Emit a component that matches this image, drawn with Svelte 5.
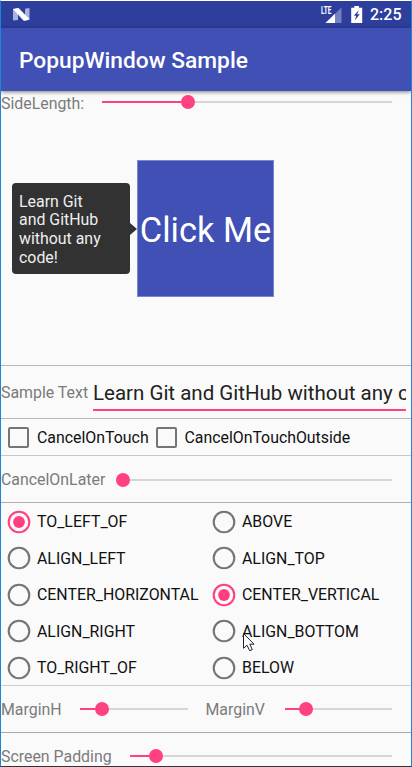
<script>
  let text = $state('Learn Git and GitHub without any code!');
  let horizontal = $state('TO_LEFT_OF');
  let vertical = $state('CENTER_VERTICAL');

  const rows = [
    ['TO_LEFT_OF', 'ABOVE'],
    ['ALIGN_LEFT', 'ALIGN_TOP'],
    ['CENTER_HORIZONTAL', 'CENTER_VERTICAL'],
    ['ALIGN_RIGHT', 'ALIGN_BOTTOM'],
    ['TO_RIGHT_OF', 'BELOW']
  ];
</script>

{#snippet slider(value)}
  <div class="slider">
    <div class="fill" style="width: {value}%"></div>
    <div class="thumb" style="left: {value}%"></div>
  </div>
{/snippet}

{#snippet radio(label, selected, choose)}
  <button class="radio" class:selected onclick={choose}>
    <svg width="24" height="24" viewBox="0 0 24 24">
      <circle cx="12" cy="12" r="10.3" fill="none" stroke="currentColor" stroke-width="2.1" />
      {#if selected}<circle cx="12" cy="12" r="5.9" fill="currentColor" />{/if}
    </svg>
    <span>{label}</span>
  </button>
{/snippet}

<div class="screen">
  <header class="status">
    <svg class="nougat" width="17" height="13" viewBox="0 0 17 13">
      <path d="M0 1.5 5 .5V12L0 12.5Z M12 .8 16.5 0V11.5L12 12.5Z" fill="#aab2df" />
      <path d="M.3 1.2 5.3 0 16.4 11.3 11 12.8Z" fill="#fff" stroke="#fff" stroke-width=".5" />
    </svg>
    <svg class="signal" width="21" height="17" viewBox="0 0 21 17">
      <path d="M20.5 1.5V17H4.5Z" fill="#7680c0" />
      <path d="M14 7.7V17H4.5Z" fill="#fff" />
      <path d="M0 0H11.5V8.5H0Z" fill="#2d3e9c" />
      <text x="0" y="8" textLength="10.5" lengthAdjust="spacingAndGlyphs">LTE</text>
    </svg>
    <svg class="battery" width="12" height="18" viewBox="0 0 12 18">
      <path d="M3.3 0H8V1.8H11.2V17H.2V1.8H3.3Z" fill="#fff" />
      <path d="M7.7 4.2 2.8 9.7H5.3L3.8 14.6 8.8 8.3H6.2Z" fill="#2d3e9c" />
    </svg>
    <span class="clock">2:25</span>
  </header>

  <div class="appbar"><h1>PopupWindow Sample</h1></div>

  <div class="row side">
    <span class="label">SideLength:</span>
    {@render slider(29.5)}
  </div>

  <div class="stage">
    <div class="popup">Learn Git<br />and GitHub<br />without any<br />code!</div>
    <button class="target">Click Me</button>
  </div>

  <div class="row sample">
    <span class="label">Sample Text</span>
    <div class="field">{text}</div>
  </div>

  <div class="row checks">
    <i class="box"></i><span class="touch">CancelOnTouch</span>
    <i class="box"></i><span class="outside">CancelOnTouchOutside</span>
  </div>

  <div class="row later">
    <span class="label">CancelOnLater</span>
    {@render slider(0)}
  </div>

  <div class="options">
    {#each rows as [h, v]}
      {@render radio(h, horizontal === h, () => (horizontal = h))}
      {@render radio(v, vertical === v, () => (vertical = v))}
    {/each}
  </div>

  <div class="row margins">
    <div class="half first">
      <span class="label">MarginH</span>
      {@render slider(20)}
    </div>
    <div class="half">
      <span class="label">MarginV</span>
      {@render slider(20)}
    </div>
  </div>

  <div class="row padding">
    <span class="label">Screen Padding</span>
    {@render slider(10)}
  </div>

  <svg class="cursor" width="14" height="21" viewBox="0 0 14 21">
    <path d="M1.5 1.5V16.3L5 13.2 7.7 18.7 10.3 17.6 7.8 12.2H12Z" fill="#fff" stroke="#242030" stroke-width="1" />
  </svg>
</div>

<style>
  .screen {
    position: relative;
    box-sizing: border-box;
    width: 412px;
    height: 767px;
    overflow: hidden;
    display: flex;
    flex-direction: column;
    background: #fafafa;
    border: 1px solid #1b86d6;
    border-top-color: #fff;
    border-bottom-color: #333;
    font-family: Roboto, sans-serif;
    font-size: 15.9px;
    color: #111;
  }
  .status {
    display: flex;
    flex: none;
    height: 27px;
    background: #2d3e9c;
    color: #fff;
  }
  .nougat { margin: 7px 0 0 12px; }
  .signal { margin: 5px 0 0 291px; overflow: visible; }
  .signal text {
    font-size: 10px;
    font-weight: 700;
    fill: #fff;
  }
  .battery { margin: 5px 0 0 9px; }
  .clock {
    margin-left: 7px;
    line-height: 28px;
    font-weight: 500;
    font-size: 16px;
  }
  .appbar {
    flex: none;
    height: 63px;
    padding-left: 18px;
    background: #4050b5;
    box-shadow: 0 1px 4px rgba(0, 0, 0, 0.5);
    z-index: 1;
  }
  h1 {
    margin: 0;
    font-size: 22.75px;
    line-height: 66px;
    font-weight: 500;
    color: #fff;
    white-space: nowrap;
  }
  .row {
    display: flex;
    flex: none;
    box-sizing: border-box;
    align-items: center;
    padding-right: 19px;
    white-space: nowrap;
  }
  .label {
    flex: none;
    color: #7b7b7b;
  }
  .slider {
    position: relative;
    flex: 1;
    height: 2px;
    background: #d6d6d6;
  }
  .fill {
    height: 2px;
    background: #ff4081;
  }
  .thumb {
    position: absolute;
    top: -6px;
    width: 14px;
    height: 14px;
    margin-left: -7px;
    border-radius: 50%;
    background: #ff4081;
  }
  .side { height: 23px; }
  .side .label { width: 101px; padding-top: 1px; }
  .side .slider { margin-bottom: 2px; }
  .stage {
    position: relative;
    flex: none;
    box-sizing: border-box;
    height: 252px;
    padding: 46px 0 0 136px;
    border-bottom: 1px solid #b7b7b7;
  }
  .target {
    display: block;
    width: 137px;
    height: 137px;
    padding: 3px 0 0;
    border: 1px solid #7b87cc;
    background: #4050b5;
    color: #fff;
    font: 34.4px Roboto, sans-serif;
    white-space: nowrap;
  }
  .popup {
    position: absolute;
    left: 11px;
    top: 68.7px;
    box-sizing: border-box;
    width: 118.3px;
    height: 91px;
    padding: 10px 7px 8px;
    border-radius: 4px;
    background: #323232;
    color: #eee;
    line-height: 18.7px;
  }
  .popup::after {
    content: '';
    position: absolute;
    left: 118px;
    top: 40px;
    border: 6px solid transparent;
    border-left: 7px solid #323232;
    border-right: 0;
  }
  .sample {
    height: 53px;
    padding-right: 5px;
    border-bottom: 1px solid #b7b7b7;
  }
  .sample .label { width: 92px; }
  .field {
    flex: 1;
    height: 34px;
    margin-top: 3px;
    box-sizing: border-box;
    overflow: hidden;
    border-bottom: 2px solid #ff4081;
    color: #222;
    font-size: 20.5px;
    line-height: 32px;
  }
  .checks {
    height: 37px;
    border-bottom: 1px solid #c8c8c8;
  }
  .box {
    box-sizing: border-box;
    width: 21px;
    height: 21px;
    margin: 0 8px 0 7px;
    border: 2px solid #757575;
    border-radius: 2px;
  }
  .touch { width: 112px; }
  .outside { letter-spacing: -0.02px; }
  .touch + .box { margin-right: 7.5px; }
  .later {
    height: 47px;
    padding-top: 1px;
    border-bottom: 1px solid #b0b0b0;
  }
  .later .label { width: 122px; }
  .options {
    display: grid;
    flex: none;
    box-sizing: border-box;
    grid-template-columns: 205px 205px;
    grid-auto-rows: 36.5px;
    height: 183px;
    border-bottom: 1px solid #cfcfcf;
  }
  .radio {
    display: flex;
    align-items: center;
    gap: 6px;
    padding: 1px 0 0 6px;
    border: 0;
    background: none;
    color: #111;
    font: 15.9px Roboto, sans-serif;
  }
  .radio svg { color: #757575; }
  .selected svg { color: #ff4081; }
  .margins {
    height: 47px;
    border-bottom: 1px solid #a8a8a8;
  }
  .half {
    display: flex;
    align-items: center;
    width: 187px;
  }
  .first { margin-right: 18px; }
  .half .label { width: 79px; padding-top: 1px; }
  .padding { height: 47px; }
  .padding .label { width: 129px; }
  .padding .slider { margin-bottom: 1px; }
  .cursor {
    position: absolute;
    left: 241px;
    top: 631px;
  }
</style>
